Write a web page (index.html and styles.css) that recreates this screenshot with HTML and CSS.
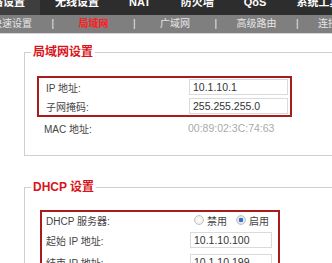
FILE: index.html
```html
<!DOCTYPE html>
<html lang="zh-CN">
<head>
    <meta charset="UTF-8">
    <title>局域网设置</title>
    <link rel="stylesheet" href="styles.css">
</head>
<body>

<div class="topnav">
    <span class="tab active">网络设置</span>
    <span class="tab">无线设置</span>
    <span class="tab">NAT</span>
    <span class="tab">防火墙</span>
    <span class="tab">QoS</span>
    <span class="tab">系统工具</span>
</div>

<div class="subnav">
    <span class="sub">快速设置</span><span class="sep">|</span>
    <span class="sub current">局域网</span><span class="sep">|</span>
    <span class="sub">广域网</span><span class="sep">|</span>
    <span class="sub">高级路由</span><span class="sep">|</span>
    <span class="sub">连接状态</span>
</div>

<div class="main">
    <fieldset class="group">
        <legend>局域网设置</legend>
        <div class="box box-lan">
            <div class="row">
                <label for="lanIp">IP 地址:</label>
                <input type="text" id="lanIp" class="field" value="10.1.10.1">
            </div>
            <div class="row">
                <label for="lanMask">子网掩码:</label>
                <input type="text" id="lanMask" class="field" value="255.255.255.0">
            </div>
        </div>
        <div class="row row-mac">
            <label>MAC 地址:</label>
            <span class="mac">00:89:02:3C:74:63</span>
        </div>
    </fieldset>

    <fieldset class="group group-dhcp">
        <legend>DHCP 设置</legend>
        <div class="box box-dhcp">
            <div class="row row-radio">
                <label>DHCP 服务器:</label>
                <span class="radios">
                    <label class="opt"><input type="radio" name="dhcp" value="0"> 禁用</label>
                    <label class="opt"><input type="radio" name="dhcp" value="1" checked> 启用</label>
                </span>
            </div>
            <div class="row">
                <label for="dhcpStart">起始 IP 地址:</label>
                <input type="text" id="dhcpStart" class="field" value="10.1.10.100">
            </div>
            <div class="row">
                <label for="dhcpEnd">结束 IP 地址:</label>
                <input type="text" id="dhcpEnd" class="field" value="10.1.10.199">
            </div>
        </div>
    </fieldset>
</div>

</body>
</html>
```

FILE: styles.css
```css
html, body {
    margin: 0;
    padding: 0;
    overflow: hidden;
}
body {
    font-family: "Liberation Sans", "Noto Sans CJK SC", sans-serif;
    font-size: 10px;
    color: #444;
    background-color: #fff;
}
.topnav {
    display: flex;
    height: 20px;
    margin-top: -5px;
    margin-left: -34px;
    background-color: #2d2d2d;
    white-space: nowrap;
}
.tab {
    padding: 0 15px;
    line-height: 14px;
    font-size: 11px;
    font-weight: bold;
    color: #fff;
}
.tab.active {
    background-color: #3e3e3e;
}
.subnav {
    display: flex;
    height: 18px;
    line-height: 18px;
    margin-left: -26px;
    background-color: #7f7f7f;
    border-bottom: 1px solid #d6d6d6;
    color: #e6e6e6;
    white-space: nowrap;
}
.sub {
    flex: 0 0 76px;
    text-align: center;
}
.sub.current {
    color: #ff2020;
    font-weight: bold;
}
.sep {
    flex: 0 0 5.5px;
    text-align: center;
    color: #eee;
}
.main {
    width: 420px;
    margin-left: 24px;
    padding-top: 10px;
}
.group {
    margin: 0;
    padding: 16px 0 18px 6px;
    border: 1px solid #cfcfcf;
}
.group legend {
    padding: 0 2px;
    line-height: 16px;
    font-size: 12px;
    font-weight: bold;
    color: #d9141b;
}
.group-dhcp {
    margin-top: 23px;
    padding-top: 15px;
}
.box {
    border: 2px solid #a81c1c;
}
.box-lan {
    width: 244px;
    margin-left: 6px;
    padding: 0 0 0 7px;
}
.box-dhcp {
    width: 232px;
    margin-left: 9px;
    padding: 0 0 4px 4px;
}
.row {
    display: grid;
    grid-template-columns: 143px auto;
    align-items: center;
    height: 18px;
}
.box-lan .row + .row {
    margin-top: 1px;
}
.box-dhcp .row {
    grid-template-columns: 144px auto;
    height: 20px;
    margin-top: 2px;
}
.box-dhcp .row-radio {
    height: 16px;
    margin-top: 0;
}
.row-mac {
    margin-top: 2px;
    padding-left: 13px;
}
.field {
    box-sizing: border-box;
    width: 99px;
    height: 16px;
    margin: 0;
    padding: 0 3px;
    border: 1px solid #dadada;
    font-family: "Liberation Sans", sans-serif;
    font-size: 10.5px;
    color: #333;
}
.box-dhcp .field {
    width: 82px;
}
.mac {
    padding-left: 1px;
    font-size: 10.5px;
    color: #aaa;
}
.radios {
    display: flex;
    gap: 9px;
    padding-left: 4px;
}
.opt {
    display: flex;
    align-items: center;
    gap: 3px;
}
.opt input {
    appearance: none;
    width: 10px;
    height: 10px;
    margin: 0;
    border: 1px solid #c4c4c4;
    border-radius: 50%;
    background: radial-gradient(circle, #fff 0, #e4e4e4 100%);
}
.opt input:checked {
    background: radial-gradient(circle, #2f6fd6 0, #2f6fd6 35%, #e8e8e8 45%, #d8d8d8 100%);
}
```
